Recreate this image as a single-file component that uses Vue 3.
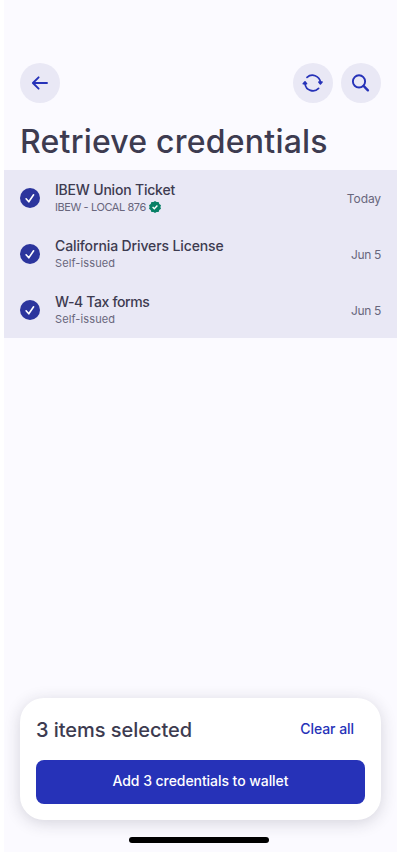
<script setup>
const items = [
  { name: 'IBEW Union Ticket', issuer: 'IBEW - LOCAL 876', date: 'Today', verified: true, key: 'ibew' },
  { name: 'California Drivers License', issuer: 'Self-issued', date: 'Jun 5', key: 'license' },
  { name: 'W-4 Tax forms', issuer: 'Self-issued', date: 'Jun 5', key: 'tax' },
]
</script>

<template>
  <main class="screen">
    <header class="toolbar">
      <button class="round" aria-label="Back">
        <svg width="40" height="40" viewBox="0 0 40 40" class="line arrow">
          <path d="M27 20H13M18.6 14.3L12.9 20L18.6 25.7" />
        </svg>
      </button>
      <div class="actions">
        <button class="round" aria-label="Refresh">
          <svg width="40" height="40" viewBox="0 0 40 40" class="line">
            <path d="M14 14.4A8 8 0 0 1 27.4 19.2M25.6 25.4A8 8 0 0 1 12 20.8" />
            <path class="tip" d="M25.8 19H29.1L27.4 21ZM10.2 20.8H13.6L12 18.8Z" />
          </svg>
        </button>
        <button class="round" aria-label="Search">
          <svg width="40" height="40" viewBox="0 0 40 40" class="line search">
            <circle cx="18" cy="18.4" r="6.1" />
            <path class="handle" d="M22.8 23.2L26.9 27.3" />
          </svg>
        </button>
      </div>
    </header>

    <h1>Retrieve credentials</h1>

    <ul class="list">
      <li v-for="item in items" :key="item.key" class="row">
        <svg class="check" width="20" height="20" viewBox="0 0 20 20">
          <circle cx="10" cy="10" r="10" />
          <path d="M6.1 10.8L8.8 13.8L13.6 6.8" />
        </svg>
        <div class="info">
          <div class="name" :class="item.key">{{ item.name }}</div>
          <div class="issuer">
            <span :class="{ local: item.verified }">{{ item.issuer }}</span>
            <svg v-if="item.verified" class="badge" width="12" height="12" viewBox="0 0 12 12">
              <path class="seal" d="M6 0L7.6 1.1L9.6 1.1L10.3 2.9L12 4.2L11.4 6L12 7.8L10.3 9.1L9.6 10.9L7.6 10.9L6 12L4.4 10.9L2.4 10.9L1.7 9.1L0 7.8L.6 6L0 4.2L1.7 2.9L2.4 1.1L4.4 1.1Z" />
              <path class="tick" d="M3.6 6.1L5.3 7.7L8.4 4.5" />
            </svg>
          </div>
        </div>
        <time :class="{ today: item.date === 'Today' }">{{ item.date }}</time>
      </li>
    </ul>

    <section class="sheet">
      <div class="summary">
        <h2>3 items selected</h2>
        <button class="clear">Clear all</button>
      </div>
      <button class="add">Add 3 credentials to wallet</button>
    </section>
    <div class="home"></div>
  </main>
</template>

<style>
body {
  background: #fff;
}
</style>

<style scoped>
.screen {
  box-sizing: border-box;
  width: 393px;
  height: 852px;
  margin: 0 auto;
  padding-top: 63px;
  display: flex;
  flex-direction: column;
  overflow: hidden;
  background: #fbfaff;
  color: #3d3b50;
  font-family: Inter, "Liberation Sans", sans-serif;
  font-weight: 500;
}
button {
  border: 0;
  padding: 0;
  font: inherit;
}
.toolbar {
  display: flex;
  justify-content: space-between;
  padding: 0 16px;
}
.actions {
  display: flex;
  gap: 8px;
}
.round {
  width: 40px;
  height: 40px;
  border-radius: 50%;
  background: #e9e8f5;
}
.round svg {
  display: block;
}
.line {
  fill: none;
  stroke: #2632b8;
  stroke-width: 1.7;
  stroke-linecap: round;
  stroke-linejoin: round;
}
.arrow {
  stroke-width: 1.9;
}
.search {
  stroke-width: 1.9;
}
.handle {
  stroke-width: 2.4;
}
.tip {
  fill: #2632b8;
  stroke-width: 1.5;
}
h1 {
  margin: 19px 16px 8px;
  height: 40px;
  font-size: 32px;
  line-height: 40px;
  font-weight: 500;
  letter-spacing: 0.22px;
  white-space: nowrap;
}
.list {
  list-style: none;
  margin: 0;
  padding: 0;
  background: #e9e8f5;
}
.row {
  height: 56px;
  display: flex;
  align-items: center;
  padding: 0 16px;
}
.check circle {
  fill: #2c359d;
}
.check path {
  fill: none;
  stroke: #fff;
  stroke-width: 1.6;
  stroke-linecap: round;
  stroke-linejoin: round;
}
.info {
  flex: 1;
  margin-left: 15px;
  padding-bottom: 2px;
  white-space: nowrap;
}
.name {
  height: 20px;
  font-size: 14px;
  line-height: 20px;
}
.ibew {
  letter-spacing: -0.2px;
}
.license {
  letter-spacing: -0.12px;
}
.tax {
  letter-spacing: -0.37px;
}
.issuer {
  display: flex;
  align-items: center;
  gap: 3px;
  height: 15px;
  font-size: 11px;
  line-height: 15px;
  font-weight: 400;
  letter-spacing: 0.12px;
  color: #68667c;
}
.local {
  letter-spacing: -0.42px;
}
.seal {
  fill: #088066;
}
.tick {
  fill: none;
  stroke: #fff;
  stroke-width: 1.4;
}
time {
  padding-top: 2px;
  font-size: 12px;
  line-height: 16px;
  font-weight: 400;
  letter-spacing: -0.35px;
  color: #68667c;
}
.today {
  letter-spacing: -0.1px;
}
.sheet {
  box-sizing: border-box;
  height: 122px;
  margin: auto 16px 17px;
  padding: 16px;
  border-radius: 24px;
  background: #fff;
  box-shadow: 0 3px 16px rgba(40, 38, 60, 0.18);
}
.summary {
  height: 32px;
  display: flex;
  align-items: center;
  justify-content: space-between;
}
h2 {
  margin: 0;
  font-size: 20px;
  line-height: 32px;
  font-weight: 500;
  letter-spacing: -0.04px;
}
.clear {
  margin-right: 11px;
  padding-bottom: 2px;
  background: none;
  color: #2632b8;
  font-size: 14px;
  line-height: 20px;
  letter-spacing: -0.05px;
}
.add {
  display: block;
  width: 100%;
  height: 44px;
  margin-top: 14px;
  padding-bottom: 3px;
  border-radius: 8px;
  background: #2632b8;
  color: #fff;
  font-size: 14px;
  letter-spacing: -0.06px;
}
.home {
  flex: none;
  width: 140px;
  height: 6px;
  margin: 0 0 9px 125px;
  border-radius: 3px;
  background: #000;
}
</style>
